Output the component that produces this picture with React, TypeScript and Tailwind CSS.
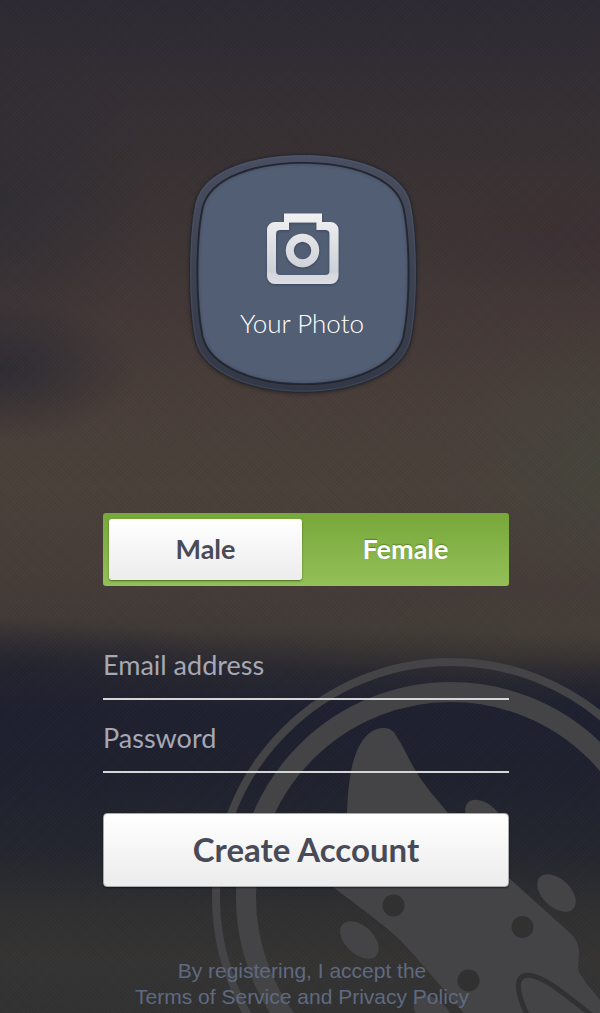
import { useState } from "react";

const outline =
  "M303 154.5C352 154.5 403 169 411 203C415 222 416.5 248 416.5 273.5C416.5 299 415 321 411 341C403 375 352 392.5 303 392.5C254 392.5 203 375 195 341C191 321 189.5 299 189.5 273.5C189.5 248 191 222 195 203C203 169 254 154.5 303 154.5Z";

function GuitarMark() {
  return (
    <svg
      aria-hidden="true"
      viewBox="212 658 478 478"
      className="pointer-events-none absolute left-[212px] top-[658px] size-[478px]"
      fill="#444446"
    >
      <g fill="none" stroke="#444446">
        <circle cx="451" cy="897" r="235" strokeWidth="8" />
        <circle cx="451" cy="897" r="205" strokeWidth="20" />
      </g>
      <path d="M384 728C373 728 366 735 361 743C351 759 348 785 347 813C346 840 333 862 333 887C362 909 383 924 400 940C422 963 440 986 462 1011L500 1060H640V1040L600 1000C592 990 584 981 579 972C577 967 579 960 579 953C579 944 575 937 570 933L509 878C489 858 468 838 448 813C437 799 426 788 417 773C409 760 404 748 397 737C394 731 390 728 384 728Z" />
      <g>
        <ellipse cx="484.500" cy="818.500" rx="23" ry="14" transform="rotate(43 484.500 818.500)" />
        <ellipse cx="556.500" cy="893" rx="23" ry="14" transform="rotate(43 556.500 893)" />
        <ellipse cx="359.500" cy="940" rx="23" ry="14" transform="rotate(43 359.500 940)" />
        <ellipse cx="433" cy="1014" rx="23" ry="14" transform="rotate(43 433 1014)" />
      </g>
      <g fill="#313132">
        <circle cx="393.500" cy="905.500" r="11" />
        <circle cx="522.500" cy="927" r="11" />
        <circle cx="468.500" cy="980.500" r="11" />
      </g>
      <path
        d="M530 1020C519 1000 513 978 525 975.500C540 972 566 995 600 1022"
        fill="none"
        stroke="#313132"
        strokeWidth="5"
      />
    </svg>
  );
}

function PhotoPicker() {
  return (
    <button type="button" className="grid cursor-pointer">
      <svg aria-hidden="true" viewBox="184 151 236 248" className="col-start-1 row-start-1 h-[248px] w-[236px]">
        <defs>
          <linearGradient id="rim" x1="0" y1="0" x2="0" y2="1">
            <stop offset="0" stopColor="#494e60" />
            <stop offset="0.5" stopColor="#3d4250" />
            <stop offset="1" stopColor="#333846" />
          </linearGradient>
          <linearGradient id="metal" x1="0" y1="213" x2="0" y2="284" gradientUnits="userSpaceOnUse">
            <stop offset="0" stopColor="#f2f2f3" />
            <stop offset="0.82" stopColor="#cdd0d7" />
            <stop offset="0.86" stopColor="#d6d8de" />
            <stop offset="1" stopColor="#dcdde2" />
          </linearGradient>
          <filter id="soft" x="-10%" y="-10%" width="120%" height="120%">
            <feGaussianBlur stdDeviation="2" />
          </filter>
          <filter id="drop" x="-20%" y="-20%" width="140%" height="140%">
            <feDropShadow dx="0" dy="1" stdDeviation="1" floodColor="#20283a" floodOpacity="0.5" />
          </filter>
          <clipPath id="face">
            <path d={outline} transform="translate(303 273.500) scale(.93) translate(-303 -273.500)" />
          </clipPath>
        </defs>
        <path d={outline} fill="#000" opacity="0.4" filter="url(#soft)" transform="translate(0 1)" />
        <path d={outline} fill="url(#rim)" stroke="#262832" strokeWidth="1" />
        <path
          d={outline}
          fill="none"
          stroke="#5a6076"
          strokeOpacity="0.35"
          transform="translate(303 273.500) scale(.988) translate(-303 -273.500)"
        />
        <g transform="translate(303 273.500) scale(.93) translate(-303 -273.500)">
          <path d={outline} fill="#525e74" stroke="#20232d" strokeWidth="2" />
        </g>
        <g clipPath="url(#face)">
          <path
            d={outline}
            fill="none"
            stroke="#303848"
            strokeOpacity="0.5"
            strokeWidth="3"
            filter="url(#soft)"
            transform="translate(303 273.500) scale(.93) translate(-303 -273.500)"
          />
        </g>
        <g fill="url(#metal)" filter="url(#drop)">
          <path
            fillRule="evenodd"
            d="M284 213.500H322V222H330.500A8 8 0 0 1 338.500 230V276A8 8 0 0 1 330.500 284H275A8 8 0 0 1 267 276V230A8 8 0 0 1 275 222H284ZM289 222.500V230H280A4 4 0 0 0 276 234V271A4 4 0 0 0 280 275H325.500A4 4 0 0 0 329.500 271V234A4 4 0 0 0 325.500 230H316.500V222.500Z"
          />
          <path
            fillRule="evenodd"
            d="M302.500 233.800A16.700 16.700 0 1 1 302.500 267.200A16.700 16.700 0 1 1 302.500 233.800ZM302.500 241.700A8.800 8.800 0 1 0 302.500 259.300A8.800 8.800 0 1 0 302.500 241.700Z"
          />
        </g>
      </svg>
      <span className="col-start-1 row-start-1 self-end pb-[58px] text-center text-[26px] leading-9 font-light text-white">
        Your Photo
      </span>
    </button>
  );
}

const genders = ["Male", "Female"];

const fieldClass =
  "h-[73px] w-full border-b-2 border-[#d5d6d8] bg-transparent pt-1 text-[27px] text-white outline-none placeholder:text-[#a6a8b4] placeholder:opacity-100";

export default function App() {
  const [gender, setGender] = useState("Male");

  return (
    <main className="relative min-h-screen overflow-hidden bg-[linear-gradient(180deg,#2d2a33_0%,#352f33_10%,#3b3334_20%,#433837_30%,#493e39_40%,#4a4139_48%,#473d39_56%,#403a37_62%,#2a2930_66%,#1f2030_70%,#1f212e_77%,#24262f_84%,#303031_90%,#353433_95%,#323233_100%)] font-['Lato',sans-serif]">
      <div
        aria-hidden="true"
        className="absolute inset-0 bg-[radial-gradient(ellipse_140px_70px_at_0px_370px,rgba(38,38,50,.75),transparent),radial-gradient(ellipse_150px_180px_at_0px_200px,rgba(42,42,52,.6),transparent),radial-gradient(ellipse_220px_60px_at_600px_240px,rgba(58,42,50,.45),transparent),radial-gradient(ellipse_160px_140px_at_600px_460px,rgba(68,70,60,.7),transparent),radial-gradient(ellipse_380px_50px_at_600px_635px,rgba(76,68,56,.5),transparent),radial-gradient(ellipse_260px_60px_at_0px_675px,rgba(31,32,46,.7),transparent)]"
      />
      <div
        aria-hidden="true"
        className="absolute inset-0 bg-[repeating-linear-gradient(45deg,rgba(0,0,0,.04)_0px,rgba(0,0,0,.04)_1px,transparent_1px,transparent_3px),repeating-linear-gradient(-45deg,rgba(255,255,255,.01)_0px,rgba(255,255,255,.01)_1px,transparent_1px,transparent_3px)]"
      />
      <GuitarMark />

      <form className="relative flex flex-col pt-[151px]" onSubmit={(e) => e.preventDefault()}>
        <div className="flex justify-center pl-1">
          <PhotoPicker />
        </div>

        <div className="flex flex-col pt-[114px] pr-[91px] pl-[103px]">
          <div
            role="radiogroup"
            aria-label="Gender"
            className="grid h-[73px] grid-cols-[193fr_207fr] rounded-[3px] bg-linear-to-b from-[#77a83a] to-[#94bf58] py-1.5 pl-1.5 text-[27px] font-bold"
          >
            {genders.map((name) => (
              <label
                key={name}
                className="relative flex cursor-pointer items-center justify-center rounded-[3px] text-white text-shadow-[0_-1px_1px_rgba(60,100,20,.6)] has-checked:bg-linear-to-b has-checked:from-white has-checked:to-[#ececed] has-checked:text-[#484b57] has-checked:shadow-[0_1px_2px_rgba(40,70,10,.7)] has-checked:text-shadow-none"
              >
                <input
                  type="radio"
                  name="gender"
                  value={name}
                  checked={gender === name}
                  onChange={() => setGender(name)}
                  className="absolute inset-0 cursor-pointer appearance-none"
                />
                {name}
              </label>
            ))}
          </div>

          <div className="flex flex-col pt-[41px]">
            <input type="email" aria-label="Email address" placeholder="Email address" className={fieldClass} />
            <input type="password" aria-label="Password" placeholder="Password" className={fieldClass} />
          </div>

          <button
            type="submit"
            className="mt-10 h-[74px] cursor-pointer rounded-[4px] border border-[#a9aaad] bg-linear-to-b from-white to-[#ececed] text-[33px] font-bold text-[#484b57] shadow-[0_1px_2px_rgba(0,0,0,.5)]"
          >
            Create Account
          </button>
        </div>

        <p className="pt-[71px] pl-1 text-center font-['Liberation_Sans',sans-serif] text-[21px] leading-[26px] text-[#5f6a80]">
          By registering, I accept the
          <br />
          <a href="#terms">Terms of Service</a> and <a href="#privacy">Privacy Policy</a>
        </p>
      </form>
    </main>
  );
}
